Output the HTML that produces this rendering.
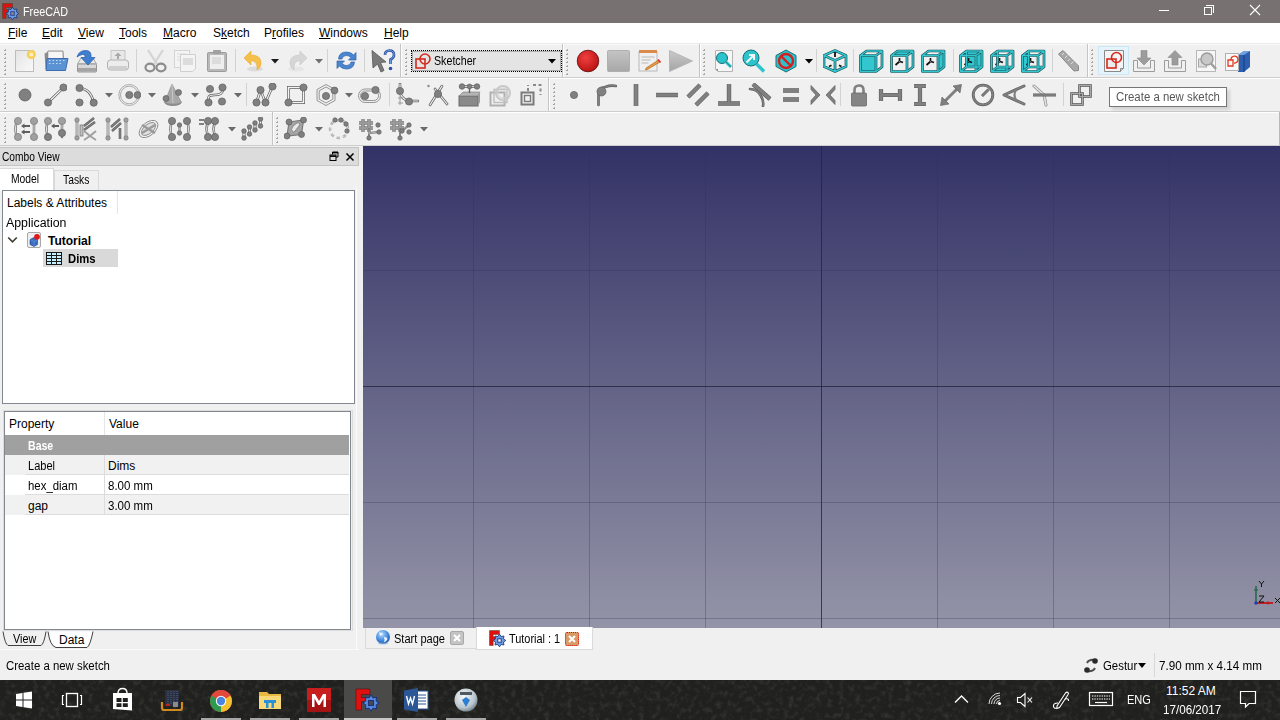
<!DOCTYPE html>
<html><head><meta charset="utf-8">
<style>
*{margin:0;padding:0;box-sizing:border-box}
html,body{width:1280px;height:720px;overflow:hidden;background:#f0f0f0;font-family:"Liberation Sans",sans-serif;font-size:12px;color:#000;position:relative}
.a{position:absolute}
.t{position:absolute;white-space:nowrap;line-height:14px}
#title{left:0;top:0;width:1280px;height:23px;background:#787171}
#menu{left:0;top:23px;width:1280px;height:20px;background:#fff}
.tb{left:0;width:1280px;height:34px;background:#f0f0f0;border-top:1px solid #fbfbfb;border-bottom:1px solid #d6d6d6}
.vsep{position:absolute;width:2px;border-left:1px solid #c8c8c8;border-right:1px solid #fff}
.grip{position:absolute;width:3px;background-image:radial-gradient(circle at 1.5px 1.5px,#a8a8a8 1px,transparent 1.2px);background-size:3px 4px}
#view3d{left:363px;top:146px;width:917px;height:482px;background:linear-gradient(#333266 0%,#9494a8 100%);overflow:hidden}
.gv{position:absolute;top:0;width:1px;height:482px;background:rgba(45,45,90,0.3)}
.gh{position:absolute;left:0;height:1px;width:917px;background:rgba(45,45,90,0.3)}
#taskbar{left:0;top:680px;width:1280px;height:40px;background:#20201e}
.u{text-decoration:underline}
</style></head><body>
<!-- title bar -->
<div id="title" class="a"></div>
<div class="t" style="left:23px;top:5px;color:#fff;font-size:12px;transform:scaleX(0.9);transform-origin:0 0">FreeCAD</div>
<!-- menu -->
<div id="menu" class="a"></div>
<div class="t" style="left:8px;top:26px"><span class="u">F</span>ile</div>
<div class="t" style="left:42px;top:26px"><span class="u">E</span>dit</div>
<div class="t" style="left:78px;top:26px"><span class="u">V</span>iew</div>
<div class="t" style="left:119px;top:26px"><span class="u">T</span>ools</div>
<div class="t" style="left:163px;top:26px"><span class="u">M</span>acro</div>
<div class="t" style="left:213px;top:26px">S<span class="u">k</span>etch</div>
<div class="t" style="left:264px;top:26px">P<span class="u">r</span>ofiles</div>
<div class="t" style="left:319px;top:26px"><span class="u">W</span>indows</div>
<div class="t" style="left:384px;top:26px"><span class="u">H</span>elp</div>
<!-- toolbars -->
<div class="a" style="left:0;top:43px;width:1280px;height:1px;background:#e9e9e9"></div>
<div class="a" style="left:0;top:44px;width:1280px;height:1px;background:#fafafa"></div>
<div class="a" style="left:0;top:77px;width:1280px;height:1px;background:#cdcdcd"></div>
<div class="a" style="left:0;top:78px;width:1280px;height:1px;background:#fff"></div>
<div class="a" style="left:0;top:111px;width:1280px;height:1px;background:#cdcdcd"></div>
<div class="a" style="left:0;top:112px;width:1280px;height:1px;background:#fff"></div>
<div class="a" style="left:0;top:145px;width:1280px;height:1px;background:#cdcdcd"></div>
<div class="a" style="left:1279px;top:112px;width:1px;height:33px;background:#b8b8b8"></div>
<div class="a" style="left:5px;top:49px;width:1px;height:1px;background:#b0b0b0"></div><div class="a" style="left:4px;top:50px;width:2px;height:1px;background:#a4a4a4"></div><div class="a" style="left:5px;top:53px;width:1px;height:1px;background:#b0b0b0"></div><div class="a" style="left:4px;top:54px;width:2px;height:1px;background:#a4a4a4"></div><div class="a" style="left:5px;top:57px;width:1px;height:1px;background:#b0b0b0"></div><div class="a" style="left:4px;top:58px;width:2px;height:1px;background:#a4a4a4"></div><div class="a" style="left:5px;top:61px;width:1px;height:1px;background:#b0b0b0"></div><div class="a" style="left:4px;top:62px;width:2px;height:1px;background:#a4a4a4"></div><div class="a" style="left:5px;top:65px;width:1px;height:1px;background:#b0b0b0"></div><div class="a" style="left:4px;top:66px;width:2px;height:1px;background:#a4a4a4"></div><div class="a" style="left:5px;top:69px;width:1px;height:1px;background:#b0b0b0"></div><div class="a" style="left:4px;top:70px;width:2px;height:1px;background:#a4a4a4"></div><div class="a" style="left:5px;top:73px;width:1px;height:1px;background:#b0b0b0"></div><div class="a" style="left:4px;top:74px;width:2px;height:1px;background:#a4a4a4"></div>
<svg class="a" style="left:14px;top:49px" width="24" height="24" viewBox="0 0 24 24"><defs><linearGradient id="pg" x1="0" y1="0" x2="1" y2="1"><stop offset="0" stop-color="#e4e4e4"/><stop offset="1" stop-color="#fafafa"/></linearGradient></defs>
<rect x="1.5" y="1.5" width="18" height="21" fill="url(#pg)" stroke="#bdbdbd"/>
<circle cx="17.3" cy="5.6" r="4.6" fill="#f8cf58"/><circle cx="17.3" cy="5.6" r="2" fill="#fff2c0"/></svg>
<svg class="a" style="left:43px;top:49px" width="26" height="24" viewBox="0 0 26 24"><path d="M3 6 L5 2 H20 L21 14 H4z" fill="#d8d8d8" stroke="#9a9a9a"/>
<path d="M6 3h13v9H6z" fill="#f6f6f6"/>
<path d="M1.5 4.5 L5 3 L5 20 L2.5 20z" fill="#8c8c8c"/>
<path d="M4 9.5 H25 L22.5 21.5 H3z" fill="#5b92d4" stroke="#3d6db0"/>
<path d="M6 11.5h16M6 14.5h12" stroke="#c7dcf5" stroke-width="1" stroke-dasharray="1.5 2"/></svg>
<svg class="a" style="left:75px;top:49px" width="24" height="24" viewBox="0 0 24 24"><path d="M2.5 15 L6 9 H18 L21.5 15z" fill="#e8e8e8" stroke="#a8a8a8"/>
<rect x="2.5" y="15" width="19" height="8" rx="1" fill="#d8d8d8" stroke="#959595"/><rect x="3" y="19" width="18" height="3.5" fill="#a4a4a4"/>
<path d="M2 8 Q4 1 11.5 1.5 Q16 2 16 6.5 V8.5 H20 L13 16 L6 8.5 H10 V7 Q10 5 7.5 5.5 Q4.5 6 2 8z" fill="#3f7fd0" stroke="#2a5aa8" stroke-width="0.7"/></svg>
<svg class="a" style="left:106px;top:49px" width="24" height="24" viewBox="0 0 24 24"><rect x="5" y="1.5" width="14" height="10" fill="#e8e8e8" stroke="#c4c4c4"/>
<path d="M12 3.5l-3.5 3.5h2.5v3h2v-3h2.5z" fill="#a8a8a8"/>
<rect x="1.5" y="11" width="21" height="10" rx="3" fill="#ececec" stroke="#b0b0b0"/>
<rect x="3" y="17" width="18" height="3" fill="#cfcfcf"/></svg>
<div class="a" style="left:136px;top:49px;width:1px;height:23px;background:#d2d2d2"></div>
<svg class="a" style="left:144px;top:49px" width="23" height="24" viewBox="0 0 23 24"><path d="M4 1 L13 15 M19 1 L10 15" stroke="#dedede" stroke-width="2.6"/>
<path d="M4 1 L13 15 M19 1 L10 15" stroke="#c8c8c8" stroke-width="0.8" fill="none"/>
<ellipse cx="6" cy="18.5" rx="4.5" ry="3.8" fill="none" stroke="#8c8c8c" stroke-width="2.2"/>
<ellipse cx="17" cy="18.5" rx="4.5" ry="3.8" fill="none" stroke="#8c8c8c" stroke-width="2.2"/></svg>
<svg class="a" style="left:173px;top:49px" width="25" height="24" viewBox="0 0 25 24"><rect x="1.5" y="1.5" width="15" height="17" fill="#f4f4f4" stroke="#d4d4d4"/>
<path d="M4 5h9M4 8h9M4 11h9" stroke="#d8d8d8"/>
<path d="M7.5 5.5 H22.5 V20 L19.5 22.5 H7.5z" fill="#f4f4f4" stroke="#cfcfcf"/>
<rect x="10" y="9" width="10" height="7" fill="#dcdcdc"/></svg>
<svg class="a" style="left:206px;top:49px" width="23" height="24" viewBox="0 0 23 24"><rect x="1.5" y="3.5" width="19" height="19" rx="1" fill="#b8b8b8" stroke="#9c9c9c"/>
<rect x="4" y="6" width="14" height="14" fill="#eeeeee"/>
<rect x="7" y="1" width="8" height="4" rx="1" fill="#a0a0a0"/>
<rect x="6" y="8" width="9" height="7" fill="#dcdcdc"/></svg>
<div class="a" style="left:235px;top:49px;width:1px;height:23px;background:#d2d2d2"></div>
<svg class="a" style="left:243px;top:49px" width="21" height="24" viewBox="0 0 21 24"><ellipse cx="12" cy="20" rx="8" ry="2.5" fill="#dcdcdc"/>
<path d="M1 9 L8 2 V6 Q18 6 18 14 Q18 19 14 21 Q15 12 8 11.5 V16z" fill="#f5c04a" stroke="#e8a830" stroke-width="0.6"/></svg>
<svg class="a" style="left:271px;top:59px" width="8" height="5" viewBox="0 0 8 5"><path d="M0 0h8l-4 4.5z" fill="#1a1a1a"/></svg>
<svg class="a" style="left:287px;top:49px" width="21" height="24" viewBox="0 0 21 24"><ellipse cx="9" cy="20" rx="8" ry="2.5" fill="#e6e6e6"/>
<path d="M20 9 L13 2 V6 Q3 6 3 14 Q3 19 7 21 Q6 12 13 11.5 V16z" fill="#d6d6d6" stroke="#c8c8c8" stroke-width="0.6"/></svg>
<svg class="a" style="left:315px;top:59px" width="8" height="5" viewBox="0 0 8 5"><path d="M0 0h8l-4 4.5z" fill="#707070"/></svg>
<div class="a" style="left:327px;top:49px;width:1px;height:23px;background:#d2d2d2"></div>
<svg class="a" style="left:335px;top:49px" width="23" height="24" viewBox="0 0 23 24"><path d="M3.5 10 Q4 3 11.5 3 Q16 3 18.5 6 L21 3.5 V11 H13.5 L16 8.5 Q14 6.5 11.5 6.5 Q7.5 6.5 7 10z" fill="#4a86d0" stroke="#2f62aa" stroke-width="0.7"/>
<path d="M19.5 13 Q19 20 11.5 20 Q7 20 4.5 17 L2 19.5 V12 H9.5 L7 14.5 Q9 16.5 11.5 16.5 Q15.5 16.5 16 13z" fill="#4a86d0" stroke="#2f62aa" stroke-width="0.7"/></svg>
<div class="a" style="left:364px;top:49px;width:1px;height:23px;background:#d2d2d2"></div>
<svg class="a" style="left:370px;top:49px" width="26" height="24" viewBox="0 0 26 24"><path d="M2 1.5 L16 13 L10.5 13.5 L14 21.5 L11 23 L7.5 15 L3 19z" fill="#7a7a7a" stroke="#555" stroke-width="0.8"/>
<path d="M15 6 Q15 1.5 19.5 1.5 Q24 1.5 24 6 Q24 9 20.5 10.5 V15" fill="none" stroke="#2d50a0" stroke-width="2.6"/>
<path d="M15 6 Q15 1.5 19.5 1.5 Q24 1.5 24 6 Q24 9 20.5 10.5 V15" fill="none" stroke="#6b9be0" stroke-width="1"/>
<circle cx="20.5" cy="19.5" r="1.8" fill="#2d50a0"/></svg>
<div class="a" style="left:400px;top:44px;width:1px;height:33px;background:#c4c4c4"></div><div class="a" style="left:401px;top:44px;width:1px;height:33px;background:#fff"></div>
<div class="a" style="left:406px;top:49px;width:1px;height:1px;background:#b0b0b0"></div><div class="a" style="left:405px;top:50px;width:2px;height:1px;background:#a4a4a4"></div><div class="a" style="left:406px;top:53px;width:1px;height:1px;background:#b0b0b0"></div><div class="a" style="left:405px;top:54px;width:2px;height:1px;background:#a4a4a4"></div><div class="a" style="left:406px;top:57px;width:1px;height:1px;background:#b0b0b0"></div><div class="a" style="left:405px;top:58px;width:2px;height:1px;background:#a4a4a4"></div><div class="a" style="left:406px;top:61px;width:1px;height:1px;background:#b0b0b0"></div><div class="a" style="left:405px;top:62px;width:2px;height:1px;background:#a4a4a4"></div><div class="a" style="left:406px;top:65px;width:1px;height:1px;background:#b0b0b0"></div><div class="a" style="left:405px;top:66px;width:2px;height:1px;background:#a4a4a4"></div><div class="a" style="left:406px;top:69px;width:1px;height:1px;background:#b0b0b0"></div><div class="a" style="left:405px;top:70px;width:2px;height:1px;background:#a4a4a4"></div><div class="a" style="left:406px;top:73px;width:1px;height:1px;background:#b0b0b0"></div><div class="a" style="left:405px;top:74px;width:2px;height:1px;background:#a4a4a4"></div>
<div class="a" style="left:411px;top:50px;width:151px;height:22px;background:#e4e4e4;border:1px dotted #000;outline:1px solid #adadad;outline-offset:-2px"></div>
<svg class="a" style="left:415px;top:53px" width="17" height="16" viewBox="0 0 17 16"><rect x="1" y="6" width="9" height="9" fill="none" stroke="#d42a1e" stroke-width="1.6"/><circle cx="10" cy="6" r="5" fill="none" stroke="#d42a1e" stroke-width="1.6"/></svg>
<div class="t" style="left:434px;top:54px;transform:scaleX(0.89);transform-origin:0 0">Sketcher</div>
<svg class="a" style="left:548px;top:59px" width="8" height="5" viewBox="0 0 8 5"><path d="M0 0h8l-4 4.5z" fill="#000"/></svg>
<div class="a" style="left:562px;top:44px;width:1px;height:33px;background:#c4c4c4"></div><div class="a" style="left:563px;top:44px;width:1px;height:33px;background:#fff"></div>
<div class="a" style="left:567px;top:49px;width:1px;height:1px;background:#b0b0b0"></div><div class="a" style="left:566px;top:50px;width:2px;height:1px;background:#a4a4a4"></div><div class="a" style="left:567px;top:53px;width:1px;height:1px;background:#b0b0b0"></div><div class="a" style="left:566px;top:54px;width:2px;height:1px;background:#a4a4a4"></div><div class="a" style="left:567px;top:57px;width:1px;height:1px;background:#b0b0b0"></div><div class="a" style="left:566px;top:58px;width:2px;height:1px;background:#a4a4a4"></div><div class="a" style="left:567px;top:61px;width:1px;height:1px;background:#b0b0b0"></div><div class="a" style="left:566px;top:62px;width:2px;height:1px;background:#a4a4a4"></div><div class="a" style="left:567px;top:65px;width:1px;height:1px;background:#b0b0b0"></div><div class="a" style="left:566px;top:66px;width:2px;height:1px;background:#a4a4a4"></div><div class="a" style="left:567px;top:69px;width:1px;height:1px;background:#b0b0b0"></div><div class="a" style="left:566px;top:70px;width:2px;height:1px;background:#a4a4a4"></div><div class="a" style="left:567px;top:73px;width:1px;height:1px;background:#b0b0b0"></div><div class="a" style="left:566px;top:74px;width:2px;height:1px;background:#a4a4a4"></div>
<svg class="a" style="left:575px;top:49px" width="26" height="24" viewBox="0 0 26 24"><defs><radialGradient id="rd" cx="0.4" cy="0.35" r="0.7"><stop offset="0" stop-color="#f04040"/><stop offset="1" stop-color="#b81010"/></radialGradient></defs><circle cx="13" cy="12" r="10.8" fill="url(#rd)" stroke="#5a1010" stroke-width="0.8"/></svg>
<svg class="a" style="left:606px;top:49px" width="25" height="24" viewBox="0 0 25 24"><defs><linearGradient id="sq" x1="0" y1="0" x2="0" y2="1"><stop offset="0" stop-color="#c4c4c4"/><stop offset="1" stop-color="#a8a8a8"/></linearGradient></defs><rect x="1.5" y="1.5" width="22" height="21" rx="1" fill="url(#sq)" stroke="#b0b0b0"/></svg>
<svg class="a" style="left:637px;top:49px" width="25" height="24" viewBox="0 0 25 24"><rect x="2" y="3" width="18" height="19" fill="#f0f0f0" stroke="#b8b8b8"/>
<rect x="2" y="1" width="18" height="3" fill="#d98a4a"/>
<path d="M4.5 8h13M4.5 11h9M4.5 14h7" stroke="#b8b8b8"/>
<path d="M9 19 L21.5 11 L23 13 L10.5 20.5 L8.5 21z" fill="#e89a40" stroke="#a0601a" stroke-width="0.6"/><path d="M21 10.5 l2.5 3" stroke="#e03030" stroke-width="1.6"/></svg>
<svg class="a" style="left:668px;top:49px" width="26" height="24" viewBox="0 0 26 24"><defs><linearGradient id="pl" x1="0" y1="0" x2="0" y2="1"><stop offset="0" stop-color="#cacaca"/><stop offset="1" stop-color="#a4a4a4"/></linearGradient></defs><path d="M1.5 1.5 L24.5 12 L1.5 22.5z" fill="url(#pl)" stroke="#b8b8b8"/></svg>
<div class="a" style="left:699px;top:44px;width:1px;height:33px;background:#c4c4c4"></div><div class="a" style="left:700px;top:44px;width:1px;height:33px;background:#fff"></div>
<div class="a" style="left:704px;top:49px;width:1px;height:1px;background:#b0b0b0"></div><div class="a" style="left:703px;top:50px;width:2px;height:1px;background:#a4a4a4"></div><div class="a" style="left:704px;top:53px;width:1px;height:1px;background:#b0b0b0"></div><div class="a" style="left:703px;top:54px;width:2px;height:1px;background:#a4a4a4"></div><div class="a" style="left:704px;top:57px;width:1px;height:1px;background:#b0b0b0"></div><div class="a" style="left:703px;top:58px;width:2px;height:1px;background:#a4a4a4"></div><div class="a" style="left:704px;top:61px;width:1px;height:1px;background:#b0b0b0"></div><div class="a" style="left:703px;top:62px;width:2px;height:1px;background:#a4a4a4"></div><div class="a" style="left:704px;top:65px;width:1px;height:1px;background:#b0b0b0"></div><div class="a" style="left:703px;top:66px;width:2px;height:1px;background:#a4a4a4"></div><div class="a" style="left:704px;top:69px;width:1px;height:1px;background:#b0b0b0"></div><div class="a" style="left:703px;top:70px;width:2px;height:1px;background:#a4a4a4"></div><div class="a" style="left:704px;top:73px;width:1px;height:1px;background:#b0b0b0"></div><div class="a" style="left:703px;top:74px;width:2px;height:1px;background:#a4a4a4"></div>
<svg class="a" style="left:714px;top:49px" width="20" height="24" viewBox="0 0 20 24"><path d="M1.5 1.5 H18.5 V22.5 H4 L1.5 20z" fill="#f6f6f6" stroke="#b4b4b4"/><path d="M1.5 20 L4 22.5 V20z" fill="#8a8a8a"/>
<circle cx="8" cy="9" r="5.5" fill="#2bc3cc" stroke="#1a6f74"/><path d="M12 13 L17 18" stroke="#2bc3cc" stroke-width="3"/><path d="M12 13 L17 18" stroke="#1a6f74" stroke-width="0.6" fill="none"/></svg>
<svg class="a" style="left:741px;top:49px" width="26" height="24" viewBox="0 0 26 24"><circle cx="10" cy="9" r="8" fill="#2bc3cc" stroke="#1a6f74"/><path d="M15.5 15 L23 22.5" stroke="#2bc3cc" stroke-width="3.4"/>
<path d="M5.5 13.5 L12 7 M8 6 H13 V11" stroke="#f4f4f4" stroke-width="2" fill="none"/></svg>
<svg class="a" style="left:773px;top:49px" width="26" height="24" viewBox="0 0 26 24"><path d="M13 1 L23 6.5 V17.5 L13 23 L3 17.5 V6.5z" fill="#2bc3cc" stroke="#1a6f74"/>
<circle cx="13" cy="12" r="7" fill="none" stroke="#d42020" stroke-width="2.4"/><path d="M8 7 L18 17" stroke="#d42020" stroke-width="2.4"/></svg>
<svg class="a" style="left:805px;top:59px" width="8" height="5" viewBox="0 0 8 5"><path d="M0 0h8l-4 4.5z" fill="#000"/></svg>
<div class="a" style="left:816px;top:49px;width:1px;height:23px;background:#d2d2d2"></div>
<svg class="a" style="left:823px;top:49px" width="25" height="24" viewBox="0 0 25 24"><path d="M12 1.5 L23 6.5 V17.5 L12 22.5 L1 17.5 V6.5z M1 6.5 L12 11.5 L23 6.5 M12 11.5 V22.5" fill="none" stroke="#1d4f54" stroke-width="2.7" stroke-linejoin="round"/><path d="M12 1.5 L23 6.5 V17.5 L12 22.5 L1 17.5 V6.5z M1 6.5 L12 11.5 L23 6.5 M12 11.5 V22.5" fill="none" stroke="#32c6cf" stroke-width="1.4" stroke-linejoin="round"/><path d="M12 3.5 V8" stroke="#111" stroke-width="1.8"/><path d="M6 17.5 L8.5 16.3 M16 16.3 L18.5 17.5" stroke="#111" stroke-width="1.8"/></svg>
<div class="a" style="left:853px;top:49px;width:1px;height:23px;background:#d2d2d2"></div>
<svg class="a" style="left:859px;top:49px" width="25" height="24" viewBox="0 0 25 24"><path d="M1.5 6.5 H17 V22.5 H1.5z" fill="#32c6cf"/><path d="M1.5 6.5 H17 V22.5 H1.5z M1.5 6.5 L7.5 2 H23 L17 6.5 M23 2 V18 L17 22.5" fill="none" stroke="#1d4f54" stroke-width="2.7" stroke-linejoin="round"/><path d="M1.5 6.5 H17 V22.5 H1.5z M1.5 6.5 L7.5 2 H23 L17 6.5 M23 2 V18 L17 22.5" fill="none" stroke="#32c6cf" stroke-width="1.4" stroke-linejoin="round"/></svg>
<svg class="a" style="left:890px;top:49px" width="25" height="24" viewBox="0 0 25 24"><path d="M1.5 6.5 L7.5 2 H23 L17 6.5z" fill="#32c6cf"/><path d="M9.5 9 V12 M9.5 12.5 L5.5 16 M10 12.5 L13 13.5" stroke="#111" stroke-width="1.7"/><path d="M1.5 6.5 H17 V22.5 H1.5z M1.5 6.5 L7.5 2 H23 L17 6.5 M23 2 V18 L17 22.5" fill="none" stroke="#1d4f54" stroke-width="2.7" stroke-linejoin="round"/><path d="M1.5 6.5 H17 V22.5 H1.5z M1.5 6.5 L7.5 2 H23 L17 6.5 M23 2 V18 L17 22.5" fill="none" stroke="#32c6cf" stroke-width="1.4" stroke-linejoin="round"/></svg>
<svg class="a" style="left:921px;top:49px" width="25" height="24" viewBox="0 0 25 24"><path d="M17 6.5 L23 2 V18 L17 22.5z" fill="#32c6cf"/><path d="M9.5 9 V12 M9.5 12.5 L5.5 16 M10 12.5 L13 13.5" stroke="#111" stroke-width="1.7"/><path d="M1.5 6.5 H17 V22.5 H1.5z M1.5 6.5 L7.5 2 H23 L17 6.5 M23 2 V18 L17 22.5" fill="none" stroke="#1d4f54" stroke-width="2.7" stroke-linejoin="round"/><path d="M1.5 6.5 H17 V22.5 H1.5z M1.5 6.5 L7.5 2 H23 L17 6.5 M23 2 V18 L17 22.5" fill="none" stroke="#32c6cf" stroke-width="1.4" stroke-linejoin="round"/></svg>
<div class="a" style="left:953px;top:49px;width:1px;height:23px;background:#d2d2d2"></div>
<svg class="a" style="left:959px;top:49px" width="25" height="24" viewBox="0 0 25 24"><path d="M7.5 2 H23 V18 H7.5z" fill="#32c6cf"/><path d="M9.5 9 V12 M9.5 12.5 L5.5 16 M10 12.5 L13 13.5" stroke="#111" stroke-width="1.7"/><path d="M1.5 6.5 H17 V22.5 H1.5z M1.5 6.5 L7.5 2 H23 L17 6.5 M23 2 V18 L17 22.5 M7.5 2 V18 H23 M7.5 18 L1.5 22.5" fill="none" stroke="#1d4f54" stroke-width="2.7" stroke-linejoin="round"/><path d="M1.5 6.5 H17 V22.5 H1.5z M1.5 6.5 L7.5 2 H23 L17 6.5 M23 2 V18 L17 22.5 M7.5 2 V18 H23 M7.5 18 L1.5 22.5" fill="none" stroke="#32c6cf" stroke-width="1.4" stroke-linejoin="round"/></svg>
<svg class="a" style="left:990px;top:49px" width="25" height="24" viewBox="0 0 25 24"><path d="M1.5 22.5 L7.5 18 H23 L17 22.5z" fill="#32c6cf"/><path d="M9.5 9 V12 M9.5 12.5 L5.5 16 M10 12.5 L13 13.5" stroke="#111" stroke-width="1.7"/><path d="M1.5 6.5 H17 V22.5 H1.5z M1.5 6.5 L7.5 2 H23 L17 6.5 M23 2 V18 L17 22.5 M7.5 2 V18 H23 M7.5 18 L1.5 22.5" fill="none" stroke="#1d4f54" stroke-width="2.7" stroke-linejoin="round"/><path d="M1.5 6.5 H17 V22.5 H1.5z M1.5 6.5 L7.5 2 H23 L17 6.5 M23 2 V18 L17 22.5 M7.5 2 V18 H23 M7.5 18 L1.5 22.5" fill="none" stroke="#32c6cf" stroke-width="1.4" stroke-linejoin="round"/></svg>
<svg class="a" style="left:1021px;top:49px" width="25" height="24" viewBox="0 0 25 24"><path d="M1.5 6.5 L7.5 2 V18 L1.5 22.5z" fill="#32c6cf"/><path d="M9.5 9 V12 M9.5 12.5 L5.5 16 M10 12.5 L13 13.5" stroke="#111" stroke-width="1.7"/><path d="M1.5 6.5 H17 V22.5 H1.5z M1.5 6.5 L7.5 2 H23 L17 6.5 M23 2 V18 L17 22.5 M7.5 2 V18 H23 M7.5 18 L1.5 22.5" fill="none" stroke="#1d4f54" stroke-width="2.7" stroke-linejoin="round"/><path d="M1.5 6.5 H17 V22.5 H1.5z M1.5 6.5 L7.5 2 H23 L17 6.5 M23 2 V18 L17 22.5 M7.5 2 V18 H23 M7.5 18 L1.5 22.5" fill="none" stroke="#32c6cf" stroke-width="1.4" stroke-linejoin="round"/></svg>
<div class="a" style="left:1052px;top:49px;width:1px;height:23px;background:#d2d2d2"></div>
<svg class="a" style="left:1057px;top:49px" width="23" height="24" viewBox="0 0 23 24"><path d="M1.5 5 L6 1.5 L21.5 17 V21.5 L17 22z" fill="#a8a8a8" stroke="#888"/><path d="M5 6l2-2M8 9l2.5-2.5M11 12l2-2M14 15l2.5-2.5" stroke="#ddd"/></svg>
<div class="a" style="left:1087px;top:44px;width:1px;height:33px;background:#c4c4c4"></div><div class="a" style="left:1088px;top:44px;width:1px;height:33px;background:#fff"></div>
<div class="a" style="left:1092px;top:49px;width:1px;height:1px;background:#b0b0b0"></div><div class="a" style="left:1091px;top:50px;width:2px;height:1px;background:#a4a4a4"></div><div class="a" style="left:1092px;top:53px;width:1px;height:1px;background:#b0b0b0"></div><div class="a" style="left:1091px;top:54px;width:2px;height:1px;background:#a4a4a4"></div><div class="a" style="left:1092px;top:57px;width:1px;height:1px;background:#b0b0b0"></div><div class="a" style="left:1091px;top:58px;width:2px;height:1px;background:#a4a4a4"></div><div class="a" style="left:1092px;top:61px;width:1px;height:1px;background:#b0b0b0"></div><div class="a" style="left:1091px;top:62px;width:2px;height:1px;background:#a4a4a4"></div><div class="a" style="left:1092px;top:65px;width:1px;height:1px;background:#b0b0b0"></div><div class="a" style="left:1091px;top:66px;width:2px;height:1px;background:#a4a4a4"></div><div class="a" style="left:1092px;top:69px;width:1px;height:1px;background:#b0b0b0"></div><div class="a" style="left:1091px;top:70px;width:2px;height:1px;background:#a4a4a4"></div><div class="a" style="left:1092px;top:73px;width:1px;height:1px;background:#b0b0b0"></div><div class="a" style="left:1091px;top:74px;width:2px;height:1px;background:#a4a4a4"></div>
<div class="a" style="left:1098px;top:46px;width:31px;height:29px;background:#e5f3fb;border:1px solid #cce8f6"></div>
<svg class="a" style="left:1103px;top:49px" width="22" height="24" viewBox="0 0 22 24"><path d="M1.5 1.5 H20.5 V19.5 L17.5 22.5 H1.5z" fill="#f4f4f4" stroke="#8a8a8a"/><path d="M17.5 22.5 V19.5 H20.5" fill="#c8c8c8" stroke="#8a8a8a"/>
<rect x="4" y="10" width="9" height="9" fill="#ececec" stroke="#d42a1e" stroke-width="1.6"/><circle cx="13.5" cy="8.5" r="5" fill="none" stroke="#d42a1e" stroke-width="1.6"/></svg>
<svg class="a" style="left:1132px;top:49px" width="24" height="24" viewBox="0 0 24 24"><path d="M1.5 11.5 V22.5 H22.5 V11.5 H18.5 V19 H5.5 V11.5z" fill="#f0f0f0" stroke="#9c9c9c"/>
<path d="M9 1.5 H15 V9 H19 L12 16 L5 9 H9z" fill="#9c9c9c" stroke="#8a8a8a" stroke-width="0.6"/></svg>
<svg class="a" style="left:1163px;top:49px" width="24" height="24" viewBox="0 0 24 24"><path d="M1.5 11.5 V22.5 H22.5 V11.5 H18.5 V19 H5.5 V11.5z" fill="#f0f0f0" stroke="#9c9c9c"/>
<path d="M9 16 H15 V8.5 H19 L12 1.5 L5 8.5 H9z" fill="#9c9c9c" stroke="#8a8a8a" stroke-width="0.6"/></svg>
<svg class="a" style="left:1195px;top:49px" width="23" height="24" viewBox="0 0 23 24"><rect x="1.5" y="1.5" width="19" height="21" fill="#f6f6f6" stroke="#b8b8b8"/><rect x="3.5" y="10" width="8" height="8" fill="#dcdcdc" stroke="#a8a8a8"/>
<circle cx="12" cy="10" r="6" fill="#c8c8c8" stroke="#9c9c9c" stroke-width="1.4"/><path d="M16 14.5 L21 20" stroke="#9c9c9c" stroke-width="2.4"/></svg>
<svg class="a" style="left:1224px;top:49px" width="27" height="24" viewBox="0 0 27 24"><path d="M14 6 L20 2 H26 V18 L20 23 H14z" fill="#2c5fb0"/><path d="M14 6 L20 2 H26 L20 6z" fill="#6fa0e0"/><path d="M20 6 V23" stroke="#163c80"/>
<rect x="1.5" y="4.5" width="13" height="17" fill="#f8f8f8" stroke="#b0b0b0"/>
<path d="M4 11 h5 v6 h-5z M7 11 a3.5 3.5 0 1 1 3 3" fill="none" stroke="#e03a1e" stroke-width="1.3"/></svg>

<div class="a" style="left:5px;top:83px;width:1px;height:1px;background:#b0b0b0"></div><div class="a" style="left:4px;top:84px;width:2px;height:1px;background:#a4a4a4"></div><div class="a" style="left:5px;top:87px;width:1px;height:1px;background:#b0b0b0"></div><div class="a" style="left:4px;top:88px;width:2px;height:1px;background:#a4a4a4"></div><div class="a" style="left:5px;top:91px;width:1px;height:1px;background:#b0b0b0"></div><div class="a" style="left:4px;top:92px;width:2px;height:1px;background:#a4a4a4"></div><div class="a" style="left:5px;top:95px;width:1px;height:1px;background:#b0b0b0"></div><div class="a" style="left:4px;top:96px;width:2px;height:1px;background:#a4a4a4"></div><div class="a" style="left:5px;top:99px;width:1px;height:1px;background:#b0b0b0"></div><div class="a" style="left:4px;top:100px;width:2px;height:1px;background:#a4a4a4"></div><div class="a" style="left:5px;top:103px;width:1px;height:1px;background:#b0b0b0"></div><div class="a" style="left:4px;top:104px;width:2px;height:1px;background:#a4a4a4"></div><div class="a" style="left:5px;top:107px;width:1px;height:1px;background:#b0b0b0"></div><div class="a" style="left:4px;top:108px;width:2px;height:1px;background:#a4a4a4"></div>
<svg class="a" style="left:13px;top:83px" width="24" height="24" viewBox="0 0 24 24"><circle cx="12" cy="12" r="6" fill="#808080" stroke="#5e5e5e" stroke-width="0.8"/></svg>
<svg class="a" style="left:43px;top:83px" width="24" height="24" viewBox="0 0 24 24"><path d="M5 19.5 L20.5 4.5" fill="none" stroke="#5e5e5e" stroke-width="2.6" stroke-linecap="round"/><path d="M5 19.5 L20.5 4.5" fill="none" stroke="#f4f4f4" stroke-width="1.2000000000000002" stroke-linecap="round"/><circle cx="5" cy="19.5" r="3.6" fill="#808080" stroke="#5e5e5e" stroke-width="0.7"/><circle cx="20.5" cy="4.5" r="3.6" fill="#808080" stroke="#5e5e5e" stroke-width="0.7"/></svg>
<svg class="a" style="left:74px;top:83px" width="24" height="24" viewBox="0 0 24 24"><path d="M5.5 5 Q17 6 19.5 19.5" fill="none" stroke="#5e5e5e" stroke-width="2.6" stroke-linecap="round"/><path d="M5.5 5 Q17 6 19.5 19.5" fill="none" stroke="#f4f4f4" stroke-width="1.2000000000000002" stroke-linecap="round"/><circle cx="5.5" cy="5" r="3.6" fill="#808080" stroke="#5e5e5e" stroke-width="0.7"/><circle cx="5.5" cy="19.5" r="3.6" fill="#808080" stroke="#5e5e5e" stroke-width="0.7"/><circle cx="19.7" cy="19.7" r="3.6" fill="#808080" stroke="#5e5e5e" stroke-width="0.7"/></svg>
<svg class="a" style="left:105px;top:93px" width="8" height="5" viewBox="0 0 8 5"><path d="M0 0h8l-4 4.5z" fill="#6a6a6a"/></svg>
<svg class="a" style="left:117px;top:83px" width="24" height="24" viewBox="0 0 24 24"><circle cx="12.3" cy="12" r="10.5" fill="none" stroke="#9a9a9a" stroke-width="0.8"/><circle cx="12.3" cy="12" r="8.8" fill="none" stroke="#9a9a9a" stroke-width="0.8"/><circle cx="12.3" cy="12" r="3.6" fill="#808080" stroke="#5e5e5e" stroke-width="0.7"/><circle cx="20.5" cy="12" r="3.4" fill="#808080" stroke="#5e5e5e" stroke-width="0.7"/></svg>
<svg class="a" style="left:148px;top:93px" width="8" height="5" viewBox="0 0 8 5"><path d="M0 0h8l-4 4.5z" fill="#6a6a6a"/></svg>
<svg class="a" style="left:161px;top:83px" width="24" height="24" viewBox="0 0 24 24"><ellipse cx="12" cy="19.5" rx="8.5" ry="3.5" fill="#8a8a8a"/><path d="M11 1 L3.5 19.5 Q12 23 20.5 19.5z" fill="#a8a8a8" stroke="#8a8a8a" stroke-width="0.6"/><path d="M11 1 L12 20" stroke="#c8c8c8" stroke-width="1"/><circle cx="17.5" cy="9.5" r="3" fill="#808080" stroke="#5e5e5e" stroke-width="0.7"/><circle cx="5" cy="15.5" r="3" fill="#808080" stroke="#5e5e5e" stroke-width="0.7"/></svg>
<svg class="a" style="left:191px;top:93px" width="8" height="5" viewBox="0 0 8 5"><path d="M0 0h8l-4 4.5z" fill="#6a6a6a"/></svg>
<svg class="a" style="left:204px;top:83px" width="24" height="24" viewBox="0 0 24 24"><path d="M4.5 19.5 V15 Q4.5 12 10 12 Q18 12 18.5 8 V4.5" fill="none" stroke="#5e5e5e" stroke-width="2.6" stroke-linecap="round"/><path d="M4.5 19.5 V15 Q4.5 12 10 12 Q18 12 18.5 8 V4.5" fill="none" stroke="#f4f4f4" stroke-width="1.2000000000000002" stroke-linecap="round"/><circle cx="6" cy="6" r="3.6" fill="#808080" stroke="#5e5e5e" stroke-width="0.7"/><circle cx="18.5" cy="4.5" r="3.6" fill="#808080" stroke="#5e5e5e" stroke-width="0.7"/><circle cx="4.5" cy="19.5" r="3.6" fill="#808080" stroke="#5e5e5e" stroke-width="0.7"/><circle cx="18" cy="18.5" r="3.6" fill="#808080" stroke="#5e5e5e" stroke-width="0.7"/></svg>
<svg class="a" style="left:234px;top:93px" width="8" height="5" viewBox="0 0 8 5"><path d="M0 0h8l-4 4.5z" fill="#6a6a6a"/></svg>
<div class="a" style="left:246px;top:83px;width:1px;height:23px;background:#d2d2d2"></div>
<svg class="a" style="left:252px;top:83px" width="25" height="24" viewBox="0 0 25 24"><path d="M4.5 19.5 L8.5 7 L13.5 19.5 L20.5 3.5" fill="none" stroke="#5e5e5e" stroke-width="2.6" stroke-linecap="round"/><path d="M4.5 19.5 L8.5 7 L13.5 19.5 L20.5 3.5" fill="none" stroke="#f4f4f4" stroke-width="1.2000000000000002" stroke-linecap="round"/><circle cx="8.5" cy="7" r="3.6" fill="#808080" stroke="#5e5e5e" stroke-width="0.7"/><circle cx="20.5" cy="3.5" r="3.6" fill="#808080" stroke="#5e5e5e" stroke-width="0.7"/><circle cx="4.5" cy="19.5" r="3.6" fill="#808080" stroke="#5e5e5e" stroke-width="0.7"/><circle cx="13.5" cy="19.5" r="3.6" fill="#808080" stroke="#5e5e5e" stroke-width="0.7"/></svg>
<svg class="a" style="left:284px;top:83px" width="24" height="24" viewBox="0 0 24 24"><path d="M4.5 4.5 H19.5 V19.5 H4.5z" fill="none" stroke="#5e5e5e" stroke-width="3" stroke-linecap="round"/><path d="M4.5 4.5 H19.5 V19.5 H4.5z" fill="none" stroke="#f4f4f4" stroke-width="1.6" stroke-linecap="round"/><circle cx="19.5" cy="4.5" r="3.6" fill="#808080" stroke="#5e5e5e" stroke-width="0.7"/><circle cx="4.5" cy="19.5" r="3.6" fill="#808080" stroke="#5e5e5e" stroke-width="0.7"/></svg>
<svg class="a" style="left:315px;top:83px" width="24" height="24" viewBox="0 0 24 24"><path d="M11 1.5 L20 6.5 V17.5 L11 22.5 L2 17.5 V6.5z" fill="none" stroke="#8a8a8a" stroke-width="0.9"/><path d="M11 4 L17.8 7.8 V16.2 L11 20 L4.2 16.2 V7.8z" fill="none" stroke="#8a8a8a" stroke-width="0.9"/><circle cx="11" cy="13" r="3.6" fill="#808080" stroke="#5e5e5e" stroke-width="0.7"/><circle cx="19.5" cy="7.5" r="3.4" fill="#808080" stroke="#5e5e5e" stroke-width="0.7"/></svg>
<svg class="a" style="left:345px;top:93px" width="8" height="5" viewBox="0 0 8 5"><path d="M0 0h8l-4 4.5z" fill="#6a6a6a"/></svg>
<svg class="a" style="left:357px;top:83px" width="25" height="24" viewBox="0 0 25 24"><rect x="1.5" y="6" width="22" height="13.5" rx="6.7" fill="none" stroke="#8a8a8a" stroke-width="0.9"/><rect x="3.5" y="8" width="18" height="9.5" rx="4.7" fill="none" stroke="#8a8a8a" stroke-width="0.9"/><circle cx="8" cy="13" r="3.6" fill="#808080" stroke="#5e5e5e" stroke-width="0.7"/><circle cx="18.5" cy="7" r="3.6" fill="#808080" stroke="#5e5e5e" stroke-width="0.7"/></svg>
<div class="a" style="left:389px;top:83px;width:1px;height:23px;background:#d2d2d2"></div>
<svg class="a" style="left:395px;top:83px" width="24" height="24" viewBox="0 0 24 24"><path d="M5 1 V8 Q5 13 10 16.5 L13 18 H23" fill="none" stroke="#5e5e5e" stroke-width="2.6" stroke-linecap="round"/><path d="M5 1 V8 Q5 13 10 16.5 L13 18 H23" fill="none" stroke="#f4f4f4" stroke-width="1.2000000000000002" stroke-linecap="round"/><path d="M3 15 H8 M5 13 V22 M3 20 H8" stroke="#9a9a9a" stroke-width="1"/><circle cx="5" cy="8" r="3.6" fill="#808080" stroke="#5e5e5e" stroke-width="0.7"/><circle cx="14" cy="18.5" r="3.6" fill="#808080" stroke="#5e5e5e" stroke-width="0.7"/></svg>
<svg class="a" style="left:426px;top:83px" width="24" height="24" viewBox="0 0 24 24"><path d="M4 22 L16 3" fill="none" stroke="#5e5e5e" stroke-width="2.6" stroke-linecap="round"/><path d="M4 22 L16 3" fill="none" stroke="#f4f4f4" stroke-width="1.2000000000000002" stroke-linecap="round"/><path d="M9 6 L21 21" fill="none" stroke="#5e5e5e" stroke-width="2.6" stroke-linecap="round"/><path d="M9 6 L21 21" fill="none" stroke="#f4f4f4" stroke-width="1.2000000000000002" stroke-linecap="round"/><circle cx="2.5" cy="3" r="1.2" fill="#8a8a8a"/><circle cx="12" cy="11" r="3.6" fill="#808080" stroke="#5e5e5e" stroke-width="0.7"/></svg>
<svg class="a" style="left:457px;top:83px" width="24" height="24" viewBox="0 0 24 24"><rect x="2" y="13" width="19" height="10" fill="#8a8a8a" stroke="#6a6a6a"/><path d="M2 13 L6 9 H23 L21 13z" fill="#b4b4b4" stroke="#7a7a7a" stroke-width="0.6"/><path d="M21 13 L23 9 V19 L21 23z" fill="#9a9a9a"/><path d="M5 3.5 H20" fill="none" stroke="#5e5e5e" stroke-width="2.6" stroke-linecap="round"/><path d="M5 3.5 H20" fill="none" stroke="#f4f4f4" stroke-width="1.2000000000000002" stroke-linecap="round"/><circle cx="5" cy="3.5" r="2.8" fill="#808080" stroke="#5e5e5e" stroke-width="0.7"/><circle cx="20" cy="3.5" r="2.8" fill="#808080" stroke="#5e5e5e" stroke-width="0.7"/><path d="M12.5 3.5 V10" stroke="#5e5e5e" stroke-width="1.4"/><circle cx="12.5" cy="3.5" r="2.4" fill="#808080" stroke="#5e5e5e" stroke-width="0.7"/></svg>
<svg class="a" style="left:488px;top:83px" width="24" height="24" viewBox="0 0 24 24"><rect x="2.5" y="9.5" width="14" height="13" fill="none" stroke="#b0b0b0" stroke-width="2"/><rect x="6" y="6.5" width="13" height="13" fill="none" stroke="#c0c0c0" stroke-width="1.5"/><circle cx="15" cy="10" r="7" fill="none" stroke="#c8c8c8" stroke-width="2"/><circle cx="15" cy="10" r="5" fill="none" stroke="#d4d4d4" stroke-width="1"/></svg>
<svg class="a" style="left:519px;top:83px" width="24" height="24" viewBox="0 0 24 24"><rect x="2.5" y="9.5" width="12" height="12" fill="none" stroke="#7a7a7a" stroke-width="2"/><rect x="5.5" y="12.5" width="6" height="6" fill="none" stroke="#7a7a7a" stroke-width="1.4"/><path d="M14 2 H21.5 V12" fill="none" stroke="#8a8a8a" stroke-width="2" stroke-dasharray="3 2.5"/><path d="M9 8 V2" stroke="#8a8a8a" stroke-width="2" stroke-dasharray="3 2"/></svg>
<div class="a" style="left:548px;top:78px;width:1px;height:33px;background:#c4c4c4"></div><div class="a" style="left:549px;top:78px;width:1px;height:33px;background:#fff"></div>
<div class="a" style="left:554px;top:83px;width:1px;height:1px;background:#b0b0b0"></div><div class="a" style="left:553px;top:84px;width:2px;height:1px;background:#a4a4a4"></div><div class="a" style="left:554px;top:87px;width:1px;height:1px;background:#b0b0b0"></div><div class="a" style="left:553px;top:88px;width:2px;height:1px;background:#a4a4a4"></div><div class="a" style="left:554px;top:91px;width:1px;height:1px;background:#b0b0b0"></div><div class="a" style="left:553px;top:92px;width:2px;height:1px;background:#a4a4a4"></div><div class="a" style="left:554px;top:95px;width:1px;height:1px;background:#b0b0b0"></div><div class="a" style="left:553px;top:96px;width:2px;height:1px;background:#a4a4a4"></div><div class="a" style="left:554px;top:99px;width:1px;height:1px;background:#b0b0b0"></div><div class="a" style="left:553px;top:100px;width:2px;height:1px;background:#a4a4a4"></div><div class="a" style="left:554px;top:103px;width:1px;height:1px;background:#b0b0b0"></div><div class="a" style="left:553px;top:104px;width:2px;height:1px;background:#a4a4a4"></div><div class="a" style="left:554px;top:107px;width:1px;height:1px;background:#b0b0b0"></div><div class="a" style="left:553px;top:108px;width:2px;height:1px;background:#a4a4a4"></div>
<svg class="a" style="left:562px;top:83px" width="24" height="24" viewBox="0 0 24 24"><circle cx="12" cy="12" r="3.6" fill="#808080" stroke="#5e5e5e" stroke-width="0.7"/></svg>
<svg class="a" style="left:593px;top:83px" width="24" height="24" viewBox="0 0 24 24"><path d="M5.5 22 V12 Q5.5 5 12 4 Q18 2 23 3" fill="none" stroke="#5e5e5e" stroke-width="2.6" stroke-linecap="round"/><path d="M5.5 22 V12 Q5.5 5 12 4 Q18 2 23 3" fill="none" stroke="#808080" stroke-width="1.4" stroke-linecap="round"/><circle cx="8.5" cy="8.5" r="4.5" fill="#808080" stroke="#5e5e5e" stroke-width="0.7"/></svg>
<svg class="a" style="left:624px;top:83px" width="24" height="24" viewBox="0 0 24 24"><path d="M12 1 V23" fill="none" stroke="#5e5e5e" stroke-width="4.6"/><path d="M12 1 V23" fill="none" stroke="#808080" stroke-width="3.3999999999999995"/></svg>
<svg class="a" style="left:655px;top:83px" width="24" height="24" viewBox="0 0 24 24"><path d="M1 12 H23" fill="none" stroke="#5e5e5e" stroke-width="4.4"/><path d="M1 12 H23" fill="none" stroke="#808080" stroke-width="3.2"/></svg>
<svg class="a" style="left:686px;top:83px" width="24" height="24" viewBox="0 0 24 24"><path d="M2 14 L14 2 M10 22 L22 10" fill="none" stroke="#5e5e5e" stroke-width="4.4"/><path d="M2 14 L14 2 M10 22 L22 10" fill="none" stroke="#808080" stroke-width="3.2"/></svg>
<svg class="a" style="left:717px;top:83px" width="24" height="24" viewBox="0 0 24 24"><path d="M12 1 V19 M1 20.5 H23" fill="none" stroke="#5e5e5e" stroke-width="4.4"/><path d="M12 1 V19 M1 20.5 H23" fill="none" stroke="#808080" stroke-width="3.2"/></svg>
<svg class="a" style="left:748px;top:83px" width="24" height="24" viewBox="0 0 24 24"><path d="M5 1 L22 16" fill="none" stroke="#5e5e5e" stroke-width="4.4"/><path d="M5 1 L22 16" fill="none" stroke="#808080" stroke-width="3.2"/><path d="M2 6 Q9 6 13 13 Q16 18 15 23" fill="none" stroke="#5e5e5e" stroke-width="2.6" stroke-linecap="round"/><path d="M2 6 Q9 6 13 13 Q16 18 15 23" fill="none" stroke="#808080" stroke-width="1.4" stroke-linecap="round"/></svg>
<svg class="a" style="left:779px;top:83px" width="24" height="24" viewBox="0 0 24 24"><path d="M4 7.5 H20 M4 16.5 H20" fill="none" stroke="#5e5e5e" stroke-width="4.6"/><path d="M4 7.5 H20 M4 16.5 H20" fill="none" stroke="#808080" stroke-width="3.3999999999999995"/></svg>
<svg class="a" style="left:810px;top:83px" width="26" height="24" viewBox="0 0 26 24"><path d="M1 2.5 L10 12 L1 21.5 V17.5 L6 12 L1 6.5z M25 2.5 L16 12 L25 21.5 V17.5 L20 12 L25 6.5z" fill="#808080" stroke="#5e5e5e" stroke-width="0.7"/></svg>
<div class="a" style="left:840px;top:83px;width:1px;height:23px;background:#d2d2d2"></div>
<svg class="a" style="left:847px;top:83px" width="24" height="24" viewBox="0 0 24 24"><path d="M7.5 10 V7 Q7.5 2.5 12 2.5 Q16.5 2.5 16.5 7 V10" fill="none" stroke="#808080" stroke-width="2.6"/><rect x="4.5" y="10" width="15" height="13" rx="1" fill="#858585" stroke="#6a6a6a" stroke-width="0.8"/></svg>
<svg class="a" style="left:878px;top:83px" width="25" height="24" viewBox="0 0 25 24"><path d="M3 6 V18 M22 6 V18 M3 12 H22" fill="none" stroke="#5e5e5e" stroke-width="4.2"/><path d="M3 6 V18 M22 6 V18 M3 12 H22" fill="none" stroke="#808080" stroke-width="3.0"/></svg>
<svg class="a" style="left:908px;top:83px" width="24" height="24" viewBox="0 0 24 24"><path d="M6 3 H18 M6 21 H18 M12 3 V21" fill="none" stroke="#5e5e5e" stroke-width="4.2"/><path d="M6 3 H18 M6 21 H18 M12 3 V21" fill="none" stroke="#808080" stroke-width="3.0"/></svg>
<svg class="a" style="left:939px;top:83px" width="25" height="24" viewBox="0 0 25 24"><path d="M4.5 19.5 L20 4" stroke="#808080" stroke-width="3"/><path d="M22.5 1.5 L21 10 L14 3z M1.5 22.5 L3 14 L10 21z" fill="#808080" stroke="#5e5e5e" stroke-width="0.6"/></svg>
<svg class="a" style="left:971px;top:83px" width="24" height="24" viewBox="0 0 24 24"><circle cx="12" cy="12" r="9.8" fill="none" stroke="#5e5e5e" stroke-width="2.8"/><circle cx="12" cy="12" r="9.8" fill="none" stroke="#808080" stroke-width="1.6"/><path d="M11 13 L17.5 6.5" fill="none" stroke="#5e5e5e" stroke-width="2.8"/><path d="M11 13 L17.5 6.5" fill="none" stroke="#808080" stroke-width="1.5999999999999999"/></svg>
<svg class="a" style="left:1002px;top:83px" width="24" height="24" viewBox="0 0 24 24"><path d="M22 3 L2 12 L22 21" fill="none" stroke="#5e5e5e" stroke-width="3" stroke-linecap="round" stroke-linejoin="round"/><path d="M22 3 L2 12 L22 21" fill="none" stroke="#808080" stroke-width="1.8" stroke-linecap="round" stroke-linejoin="round"/><path d="M14 7 Q11 12 14 17" fill="none" stroke="#808080" stroke-width="2.2"/></svg>
<svg class="a" style="left:1032px;top:83px" width="25" height="24" viewBox="0 0 25 24"><path d="M2 3 L12 12 L14 22" fill="none" stroke="#8a8a8a" stroke-width="3" stroke-linecap="round"/><path d="M2 3 L12 12 L14 22" fill="none" stroke="#e4e4e4" stroke-width="1.6" stroke-linecap="round"/><path d="M1 12 H24" fill="none" stroke="#5e5e5e" stroke-width="3"/><path d="M1 12 H24" fill="none" stroke="#808080" stroke-width="1.8"/></svg>
<div class="a" style="left:1063px;top:83px;width:1px;height:23px;background:#d2d2d2"></div>
<svg class="a" style="left:1069px;top:83px" width="25" height="24" viewBox="0 0 25 24"><rect x="2.5" y="10.5" width="11" height="11" fill="none" stroke="#5e5e5e" stroke-width="2.6"/><rect x="10.5" y="2.5" width="11" height="11" fill="none" stroke="#5e5e5e" stroke-width="2.6"/><rect x="2.5" y="10.5" width="11" height="11" fill="none" stroke="#a8a8a8" stroke-width="1"/><rect x="10.5" y="2.5" width="11" height="11" fill="none" stroke="#a8a8a8" stroke-width="1"/></svg>
<div class="a" style="left:1112px;top:90px;width:118px;height:20px;background:rgba(0,0,0,0.12);filter:blur(1.5px)"></div>
<div class="a" style="left:1109px;top:87px;width:118px;height:20px;background:#fff;border:1px solid #767676"></div>
<div class="t" style="left:1116px;top:90px;color:#575757;transform:scaleX(0.95);transform-origin:0 0">Create a new sketch</div>

<div class="a" style="left:5px;top:117px;width:1px;height:1px;background:#b0b0b0"></div><div class="a" style="left:4px;top:118px;width:2px;height:1px;background:#a4a4a4"></div><div class="a" style="left:5px;top:121px;width:1px;height:1px;background:#b0b0b0"></div><div class="a" style="left:4px;top:122px;width:2px;height:1px;background:#a4a4a4"></div><div class="a" style="left:5px;top:125px;width:1px;height:1px;background:#b0b0b0"></div><div class="a" style="left:4px;top:126px;width:2px;height:1px;background:#a4a4a4"></div><div class="a" style="left:5px;top:129px;width:1px;height:1px;background:#b0b0b0"></div><div class="a" style="left:4px;top:130px;width:2px;height:1px;background:#a4a4a4"></div><div class="a" style="left:5px;top:133px;width:1px;height:1px;background:#b0b0b0"></div><div class="a" style="left:4px;top:134px;width:2px;height:1px;background:#a4a4a4"></div><div class="a" style="left:5px;top:137px;width:1px;height:1px;background:#b0b0b0"></div><div class="a" style="left:4px;top:138px;width:2px;height:1px;background:#a4a4a4"></div><div class="a" style="left:5px;top:141px;width:1px;height:1px;background:#b0b0b0"></div><div class="a" style="left:4px;top:142px;width:2px;height:1px;background:#a4a4a4"></div>
<svg class="a" style="left:13px;top:117px" width="25" height="24" viewBox="0 0 25 24"><path d="M4 4 Q1 12 4 20" fill="none" stroke="#5e5e5e" stroke-width="2.4" stroke-linecap="round"/><path d="M4 4 Q1 12 4 20" fill="none" stroke="#f4f4f4" stroke-width="1.0" stroke-linecap="round"/><path d="M21 4 V20" fill="none" stroke="#5e5e5e" stroke-width="2.4" stroke-linecap="round"/><path d="M21 4 V20" fill="none" stroke="#f4f4f4" stroke-width="1.0" stroke-linecap="round"/><circle cx="5" cy="4" r="3.6" fill="#a0a0a0" stroke="#7a7a7a" stroke-width="0.7"/><circle cx="21" cy="4" r="3.6" fill="#a0a0a0" stroke="#7a7a7a" stroke-width="0.7"/><circle cx="5" cy="20" r="3.6" fill="#a0a0a0" stroke="#7a7a7a" stroke-width="0.7"/><circle cx="21" cy="20" r="3.6" fill="#a0a0a0" stroke="#7a7a7a" stroke-width="0.7"/><path d="M17 9 H10 M17 15 H10" stroke="#5e5e5e" stroke-width="2"/><path d="M8 9 l3.5-2.5v5z M8 15 l3.5-2.5v5z" fill="#5e5e5e"/></svg>
<svg class="a" style="left:43px;top:117px" width="25" height="24" viewBox="0 0 25 24"><path d="M5 4 Q2 12 5 20" fill="none" stroke="#5e5e5e" stroke-width="2.4" stroke-linecap="round"/><path d="M5 4 Q2 12 5 20" fill="none" stroke="#f4f4f4" stroke-width="1.0" stroke-linecap="round"/><path d="M19 4 V20" fill="none" stroke="#5e5e5e" stroke-width="2.4" stroke-linecap="round"/><path d="M19 4 V20" fill="none" stroke="#f4f4f4" stroke-width="1.0" stroke-linecap="round"/><circle cx="5" cy="4" r="3.6" fill="#a0a0a0" stroke="#7a7a7a" stroke-width="0.7"/><circle cx="19" cy="4" r="3.6" fill="#a0a0a0" stroke="#7a7a7a" stroke-width="0.7"/><circle cx="5" cy="20" r="3.6" fill="#808080" stroke="#5e5e5e" stroke-width="0.7"/><circle cx="19" cy="16" r="3.6" fill="#808080" stroke="#5e5e5e" stroke-width="0.7"/><path d="M16 9 H10" stroke="#5e5e5e" stroke-width="2"/><path d="M8 9 l3.5-2.5v5z" fill="#5e5e5e"/></svg>
<svg class="a" style="left:74px;top:117px" width="25" height="24" viewBox="0 0 25 24"><path d="M3 3 V21" fill="none" stroke="#5e5e5e" stroke-width="2.6" stroke-linecap="round"/><path d="M3 3 V21" fill="none" stroke="#f4f4f4" stroke-width="1.2000000000000002" stroke-linecap="round"/><circle cx="3" cy="3" r="2.2" fill="#a0a0a0" stroke="#7a7a7a" stroke-width="0.7"/><circle cx="3" cy="21" r="2.2" fill="#a0a0a0" stroke="#7a7a7a" stroke-width="0.7"/><rect x="6" y="8" width="3" height="11" fill="#c0c0c0" stroke="#7a7a7a" stroke-width="0.8"/><path d="M10 9 L20 1 M10 13 L21 5" fill="none" stroke="#5e5e5e" stroke-width="2.4"/><path d="M10 9 L20 1 M10 13 L21 5" fill="none" stroke="#808080" stroke-width="1.2"/><path d="M10 14 L16 19 L10 23 M22 14 L16 19 L22 23" fill="none" stroke="#a0a0a0" stroke-width="2"/></svg>
<svg class="a" style="left:105px;top:117px" width="25" height="24" viewBox="0 0 25 24"><path d="M3 3 V21" fill="none" stroke="#5e5e5e" stroke-width="2.6" stroke-linecap="round"/><path d="M3 3 V21" fill="none" stroke="#f4f4f4" stroke-width="1.2000000000000002" stroke-linecap="round"/><circle cx="3" cy="3" r="2.2" fill="#a0a0a0" stroke="#7a7a7a" stroke-width="0.7"/><circle cx="3" cy="21" r="2.2" fill="#a0a0a0" stroke="#7a7a7a" stroke-width="0.7"/><path d="M21 3 V21" fill="none" stroke="#5e5e5e" stroke-width="2.6" stroke-linecap="round"/><path d="M21 3 V21" fill="none" stroke="#f4f4f4" stroke-width="1.2000000000000002" stroke-linecap="round"/><circle cx="21" cy="3" r="2.2" fill="#a0a0a0" stroke="#7a7a7a" stroke-width="0.7"/><circle cx="21" cy="21" r="2.2" fill="#a0a0a0" stroke="#7a7a7a" stroke-width="0.7"/><path d="M6 10 L15 2 M7 14 L16 6" fill="none" stroke="#5e5e5e" stroke-width="2.4"/><path d="M6 10 L15 2 M7 14 L16 6" fill="none" stroke="#808080" stroke-width="1.2"/><path d="M15 11 V22" fill="none" stroke="#5e5e5e" stroke-width="2.6"/><path d="M15 11 V22" fill="none" stroke="#808080" stroke-width="1.4000000000000001"/></svg>
<svg class="a" style="left:136px;top:117px" width="25" height="24" viewBox="0 0 25 24"><ellipse cx="12.5" cy="12" rx="11" ry="6.5" transform="rotate(-40 12.5 12)" fill="none" stroke="#8a8a8a" stroke-width="0.9"/><ellipse cx="12.5" cy="12" rx="8.5" ry="4.5" transform="rotate(-40 12.5 12)" fill="#e0e0e0" stroke="#8a8a8a" stroke-width="0.9"/><path d="M6 8 L19 16 M6 16 L19 8" stroke="#9a9a9a" stroke-width="2.6"/></svg>
<svg class="a" style="left:167px;top:117px" width="25" height="24" viewBox="0 0 25 24"><path d="M5 4 Q2 12 5 20" fill="none" stroke="#5e5e5e" stroke-width="2.4" stroke-linecap="round"/><path d="M5 4 Q2 12 5 20" fill="none" stroke="#f4f4f4" stroke-width="1.0" stroke-linecap="round"/><path d="M20 4 Q23 12 20 20" fill="none" stroke="#5e5e5e" stroke-width="2.4" stroke-linecap="round"/><path d="M20 4 Q23 12 20 20" fill="none" stroke="#f4f4f4" stroke-width="1.0" stroke-linecap="round"/><circle cx="5" cy="4" r="3.6" fill="#808080" stroke="#5e5e5e" stroke-width="0.7"/><circle cx="20" cy="4" r="3.6" fill="#808080" stroke="#5e5e5e" stroke-width="0.7"/><circle cx="5" cy="20" r="3.6" fill="#808080" stroke="#5e5e5e" stroke-width="0.7"/><circle cx="20" cy="20" r="3.6" fill="#808080" stroke="#5e5e5e" stroke-width="0.7"/><path d="M12.5 8 V16" fill="none" stroke="#5e5e5e" stroke-width="2" stroke-linecap="round"/><path d="M12.5 8 V16" fill="none" stroke="#f4f4f4" stroke-width="0.6000000000000001" stroke-linecap="round"/><circle cx="12.5" cy="8" r="2.2" fill="#808080" stroke="#5e5e5e" stroke-width="0.7"/><circle cx="12.5" cy="16" r="2.2" fill="#808080" stroke="#5e5e5e" stroke-width="0.7"/></svg>
<svg class="a" style="left:198px;top:117px" width="25" height="24" viewBox="0 0 25 24"><path d="M1 3 H6 M1 7 H6" stroke="#808080" stroke-width="2"/><path d="M11 4 Q6 12 11 20" fill="none" stroke="#5e5e5e" stroke-width="2.4" stroke-linecap="round"/><path d="M11 4 Q6 12 11 20" fill="none" stroke="#f4f4f4" stroke-width="1.0" stroke-linecap="round"/><path d="M18 4 Q13 12 18 20" fill="none" stroke="#5e5e5e" stroke-width="2.4" stroke-linecap="round"/><path d="M18 4 Q13 12 18 20" fill="none" stroke="#f4f4f4" stroke-width="1.0" stroke-linecap="round"/><circle cx="10" cy="4" r="3.6" fill="#808080" stroke="#5e5e5e" stroke-width="0.7"/><circle cx="17" cy="4" r="3.6" fill="#808080" stroke="#5e5e5e" stroke-width="0.7"/><circle cx="10" cy="20" r="3.6" fill="#808080" stroke="#5e5e5e" stroke-width="0.7"/><circle cx="17" cy="20" r="3.6" fill="#808080" stroke="#5e5e5e" stroke-width="0.7"/></svg>
<svg class="a" style="left:228px;top:127px" width="8" height="5" viewBox="0 0 8 5"><path d="M0 0h8l-4 4.5z" fill="#6a6a6a"/></svg>
<svg class="a" style="left:241px;top:117px" width="25" height="24" viewBox="0 0 25 24"><path d="M3 21 V14" fill="none" stroke="#5e5e5e" stroke-width="3" stroke-linecap="round"/><path d="M3 21 V14" fill="none" stroke="#f4f4f4" stroke-width="1.6" stroke-linecap="round"/><path d="M8.5 17 V10" fill="none" stroke="#5e5e5e" stroke-width="3" stroke-linecap="round"/><path d="M8.5 17 V10" fill="none" stroke="#f4f4f4" stroke-width="1.6" stroke-linecap="round"/><path d="M14 13 V6" fill="none" stroke="#5e5e5e" stroke-width="3" stroke-linecap="round"/><path d="M14 13 V6" fill="none" stroke="#f4f4f4" stroke-width="1.6" stroke-linecap="round"/><path d="M19.5 9 V2" fill="none" stroke="#5e5e5e" stroke-width="3" stroke-linecap="round"/><path d="M19.5 9 V2" fill="none" stroke="#f4f4f4" stroke-width="1.6" stroke-linecap="round"/><circle cx="3" cy="21" r="2.3" fill="#808080" stroke="#5e5e5e" stroke-width="0.7"/><circle cx="3" cy="14" r="2.3" fill="#808080" stroke="#5e5e5e" stroke-width="0.7"/><circle cx="8.5" cy="17" r="2.3" fill="#808080" stroke="#5e5e5e" stroke-width="0.7"/><circle cx="8.5" cy="10" r="2.3" fill="#808080" stroke="#5e5e5e" stroke-width="0.7"/><circle cx="14" cy="13" r="2.3" fill="#808080" stroke="#5e5e5e" stroke-width="0.7"/><circle cx="14" cy="6" r="2.3" fill="#808080" stroke="#5e5e5e" stroke-width="0.7"/><circle cx="19.5" cy="9" r="2.3" fill="#808080" stroke="#5e5e5e" stroke-width="0.7"/><circle cx="19.5" cy="2" r="2.3" fill="#808080" stroke="#5e5e5e" stroke-width="0.7"/></svg>
<div class="a" style="left:272px;top:112px;width:1px;height:33px;background:#c4c4c4"></div><div class="a" style="left:273px;top:112px;width:1px;height:33px;background:#fff"></div>
<div class="a" style="left:277px;top:117px;width:1px;height:1px;background:#b0b0b0"></div><div class="a" style="left:276px;top:118px;width:2px;height:1px;background:#a4a4a4"></div><div class="a" style="left:277px;top:121px;width:1px;height:1px;background:#b0b0b0"></div><div class="a" style="left:276px;top:122px;width:2px;height:1px;background:#a4a4a4"></div><div class="a" style="left:277px;top:125px;width:1px;height:1px;background:#b0b0b0"></div><div class="a" style="left:276px;top:126px;width:2px;height:1px;background:#a4a4a4"></div><div class="a" style="left:277px;top:129px;width:1px;height:1px;background:#b0b0b0"></div><div class="a" style="left:276px;top:130px;width:2px;height:1px;background:#a4a4a4"></div><div class="a" style="left:277px;top:133px;width:1px;height:1px;background:#b0b0b0"></div><div class="a" style="left:276px;top:134px;width:2px;height:1px;background:#a4a4a4"></div><div class="a" style="left:277px;top:137px;width:1px;height:1px;background:#b0b0b0"></div><div class="a" style="left:276px;top:138px;width:2px;height:1px;background:#a4a4a4"></div><div class="a" style="left:277px;top:141px;width:1px;height:1px;background:#b0b0b0"></div><div class="a" style="left:276px;top:142px;width:2px;height:1px;background:#a4a4a4"></div>
<svg class="a" style="left:284px;top:117px" width="25" height="24" viewBox="0 0 25 24"><path d="M5 5 L19.5 3 L17.5 17.5 L3 19z" fill="#a4a4a4" stroke="#7a7a7a" stroke-width="1.2"/><path d="M9 15 Q6 13 9 9 L13 6 Q17 5 15 9 L11 14 Q10 16 9 15z" fill="#e8e8e8" stroke="#777" stroke-width="0.8"/><circle cx="5" cy="5" r="3" fill="#808080" stroke="#5e5e5e" stroke-width="0.7"/><circle cx="19.5" cy="3" r="3" fill="#808080" stroke="#5e5e5e" stroke-width="0.7"/><circle cx="17.5" cy="17.5" r="3" fill="#808080" stroke="#5e5e5e" stroke-width="0.7"/><circle cx="3" cy="19" r="3" fill="#808080" stroke="#5e5e5e" stroke-width="0.7"/></svg>
<svg class="a" style="left:315px;top:127px" width="8" height="5" viewBox="0 0 8 5"><path d="M0 0h8l-4 4.5z" fill="#6a6a6a"/></svg>
<svg class="a" style="left:327px;top:117px" width="25" height="24" viewBox="0 0 25 24"><circle cx="12" cy="12" r="9" fill="none" stroke="#9a9a9a" stroke-width="2.4" stroke-dasharray="3.5 3"/><circle cx="12" cy="12" r="9" fill="none" stroke="#e8e8e8" stroke-width="1" stroke-dasharray="3.5 3"/><circle cx="8" cy="3" r="2.2" fill="#808080" stroke="#5e5e5e" stroke-width="0.7"/><circle cx="14" cy="3" r="2.2" fill="#808080" stroke="#5e5e5e" stroke-width="0.7"/><circle cx="19" cy="7" r="2.2" fill="#808080" stroke="#5e5e5e" stroke-width="0.7"/><circle cx="20" cy="14" r="2.2" fill="#808080" stroke="#5e5e5e" stroke-width="0.7"/></svg>
<svg class="a" style="left:358px;top:117px" width="25" height="24" viewBox="0 0 25 24"><path d="M5 2 V15 M11 2 V15 M1 6 H15 M1 11 H15" stroke="#7a7a7a" stroke-width="3.4"/><path d="M5 2 V15 M11 2 V15 M1 6 H15 M1 11 H15" stroke="#9a9a9a" stroke-width="2.2"/><path d="M11 21 V12 M11 16 L21 15" fill="none" stroke="#5e5e5e" stroke-width="2" stroke-linecap="round"/><path d="M11 21 V12 M11 16 L21 15" fill="none" stroke="#f4f4f4" stroke-width="0.6000000000000001" stroke-linecap="round"/><circle cx="11" cy="21" r="2.2" fill="#808080" stroke="#5e5e5e" stroke-width="0.7"/><circle cx="21" cy="15" r="2.2" fill="#808080" stroke="#5e5e5e" stroke-width="0.7"/><circle cx="20" cy="8" r="2.2" fill="#808080" stroke="#5e5e5e" stroke-width="0.7"/></svg>
<svg class="a" style="left:389px;top:117px" width="25" height="24" viewBox="0 0 25 24"><path d="M5 2 V15 M11 2 V15 M1 6 H15 M1 11 H15" stroke="#7a7a7a" stroke-width="3.4"/><path d="M5 2 V15 M11 2 V15 M1 6 H15 M1 11 H15" stroke="#9a9a9a" stroke-width="2.2"/><path d="M11 21 V12 M13 14 L20 8" fill="none" stroke="#5e5e5e" stroke-width="2" stroke-linecap="round"/><path d="M11 21 V12 M13 14 L20 8" fill="none" stroke="#f4f4f4" stroke-width="0.6000000000000001" stroke-linecap="round"/><circle cx="11" cy="21" r="2.2" fill="#808080" stroke="#5e5e5e" stroke-width="0.7"/><circle cx="20" cy="15" r="2.2" fill="#808080" stroke="#5e5e5e" stroke-width="0.7"/><circle cx="20" cy="8" r="2.2" fill="#808080" stroke="#5e5e5e" stroke-width="0.7"/><circle cx="13" cy="14" r="2.2" fill="#808080" stroke="#5e5e5e" stroke-width="0.7"/></svg>
<svg class="a" style="left:420px;top:127px" width="8" height="5" viewBox="0 0 8 5"><path d="M0 0h8l-4 4.5z" fill="#6a6a6a"/></svg>


<!-- 3D view -->
<div id="view3d" class="a">
  <div class="gv" style="left:110px"></div>
  <div class="gv" style="left:226px"></div>
  <div class="gv" style="left:342px"></div>
  <div class="gv" style="left:458px;background:rgba(30,40,60,0.8)"></div>
  <div class="gv" style="left:574px"></div>
  <div class="gv" style="left:690px"></div>
  <div class="gv" style="left:806px"></div>
  <div class="gh" style="top:124px"></div>
  <div class="gh" style="top:240px;background:rgba(30,40,60,0.8)"></div>
  <div class="gh" style="top:356px"></div>
  <div class="gh" style="top:472px"></div>
</div>


<!-- title controls -->
<div class="a" style="left:1159px;top:10px;width:10px;height:1px;background:#fff"></div>
<div class="a" style="left:1204px;top:7px;width:8px;height:8px;border:1px solid #fff"></div>
<div class="a" style="left:1206px;top:5px;width:8px;height:8px;border-top:1px solid #fff;border-right:1px solid #fff"></div>
<svg class="a" style="left:1249px;top:4px" width="12" height="12"><path d="M1 1L11 11M11 1L1 11" stroke="#fff" stroke-width="1.1"/></svg>
<!-- app icon -->
<svg class="a" style="left:2px;top:3px" width="18" height="17" viewBox="0 0 18 17">
<path d="M0.5 0.5h10v4H4.2v2.2h4v3H4.2v5.8H0.5z" fill="#e01010" stroke="#3a4a20" stroke-width="0.5"/>
<path d="M10.50 4.20 L12.15 6.53 L14.95 6.05 L14.47 8.85 L16.80 10.50 L14.47 12.15 L14.95 14.95 L12.15 14.47 L10.50 16.80 L8.85 14.47 L6.05 14.95 L6.53 12.15 L4.20 10.50 L6.53 8.85 L6.05 6.05 L8.85 6.53z" fill="#6a9ee0" stroke="#233a88" stroke-width="0.9" stroke-linejoin="round"/>
<rect x="8.8" y="8.8" width="3.4" height="3.4" fill="#9a9a9a" stroke="#233a88" stroke-width="1"/>
</svg>

<!-- combo view panel -->
<div class="a" style="left:0;top:147px;width:359px;height:19px;background:#dcdcdc;border:1px solid #c4c4c4;border-left:none"></div>
<div class="t" style="left:2px;top:150px;transform:scaleX(0.85);transform-origin:0 0">Combo View</div>
<svg class="a" style="left:329px;top:151px" width="10" height="10"><rect x="1" y="4" width="6" height="5.5" fill="#dcdcdc" stroke="#000"/><path d="M1 5.2h6" stroke="#000" stroke-width="1.5"/><path d="M3.5 3.5V1h5.5v5h-2" fill="none" stroke="#000"/><path d="M3.5 1.7h5.5" stroke="#000" stroke-width="1.4"/></svg>
<svg class="a" style="left:345px;top:152px" width="10" height="10"><path d="M1.5 1.5L8.5 8.5M8.5 1.5L1.5 8.5" stroke="#000" stroke-width="1.5"/></svg>

<!-- tabs -->
<div class="a" style="left:54px;top:170px;width:45px;height:20px;background:#f0f0f0;border:1px solid #d9d9d9;border-bottom:none"></div>
<div class="t" style="left:63px;top:173px;transform:scaleX(0.86);transform-origin:0 0">Tasks</div>
<div class="a" style="left:0;top:168px;width:54px;height:23px;background:#fff;border:1px solid #d9d9d9;border-bottom:none;border-left:none"></div>
<div class="t" style="left:11px;top:172px;transform:scaleX(0.86);transform-origin:0 0">Model</div>

<!-- tree -->
<div class="a" style="left:2px;top:190px;width:353px;height:214px;background:#fff;border:1px solid #828790"></div>
<div class="a" style="left:117px;top:191px;width:1px;height:23px;background:#e5e5e5"></div>
<div class="t" style="left:7px;top:196px">Labels &amp; Attributes</div>
<div class="t" style="left:6px;top:216px;transform:scaleX(1.03);transform-origin:0 0">Application</div>
<svg class="a" style="left:7px;top:236px" width="11" height="8"><path d="M1.2 1.5l4.3 4.3 4.3-4.3" fill="none" stroke="#404038" stroke-width="1.7"/></svg>
<div class="a" style="left:27px;top:232px;width:14px;height:16px;border:1px solid #a8a8a8;background:#efefef;border-radius:2px"></div>
<svg class="a" style="left:27px;top:232px" width="14" height="16"><path d="M3 7.5 L7 5.5 L10.5 7.5 V12.5 L7 14.5 L3 12.5z" fill="#3a6cc0" stroke="#1d3f88" stroke-width="0.6"/><path d="M3 7.5 L7 9.5 L10.5 7.5 M7 9.5 V14.5" stroke="#6a9ae0" stroke-width="0.6" fill="none"/><circle cx="10" cy="4.8" r="2.9" fill="#e01818"/></svg>
<div class="t" style="left:48px;top:234px;font-weight:bold">Tutorial</div>
<div class="a" style="left:43px;top:249px;width:75px;height:18px;background:#d9d9d9"></div>
<svg class="a" style="left:46px;top:252px" width="17" height="14" shape-rendering="crispEdges"><rect x="0" y="0" width="16" height="13" fill="#1a1a1a"/><rect x="1" y="1" width="4" height="2" fill="#c4f0ff"/><rect x="6" y="1" width="4" height="2" fill="#c4f0ff"/><rect x="11" y="1" width="4" height="2" fill="#c4f0ff"/><rect x="1" y="4" width="4" height="2" fill="#c4f0ff"/><rect x="6" y="4" width="4" height="2" fill="#c4f0ff"/><rect x="11" y="4" width="4" height="2" fill="#c4f0ff"/><rect x="1" y="7" width="4" height="2" fill="#c4f0ff"/><rect x="6" y="7" width="4" height="2" fill="#c4f0ff"/><rect x="11" y="7" width="4" height="2" fill="#c4f0ff"/><rect x="1" y="10" width="4" height="2" fill="#c4f0ff"/><rect x="6" y="10" width="4" height="2" fill="#c4f0ff"/><rect x="11" y="10" width="4" height="2" fill="#c4f0ff"/></svg>
<div class="t" style="left:68px;top:252px;font-weight:bold;transform:scaleX(0.94);transform-origin:0 0">Dims</div>

<!-- property view -->
<div class="a" style="left:3px;top:410px;width:350px;height:221px;border:1px solid #dcdcdc"></div>
<div class="a" style="left:4px;top:411px;width:347px;height:219px;background:#fff;border:1px solid #828790"></div>
<div class="a" style="left:104px;top:412px;width:1px;height:23px;background:#e5e5e5"></div>
<div class="t" style="left:9px;top:417px">Property</div>
<div class="t" style="left:109px;top:417px">Value</div>
<div class="a" style="left:5px;top:435px;width:344px;height:20px;background:#a0a0a0"></div>
<div class="t" style="left:28px;top:439px;font-weight:bold;color:#fff;transform:scaleX(0.88);transform-origin:0 0">Base</div>
<div class="a" style="left:5px;top:455px;width:344px;height:20px;background:#f1f1f1"></div>
<div class="a" style="left:5px;top:495px;width:344px;height:20px;background:#f1f1f1"></div>
<div class="a" style="left:25px;top:474px;width:324px;height:1px;background:#dcdcdc"></div>
<div class="a" style="left:25px;top:494px;width:324px;height:1px;background:#dcdcdc"></div>
<div class="a" style="left:25px;top:514px;width:324px;height:1px;background:#dcdcdc"></div>
<div class="a" style="left:104px;top:455px;width:1px;height:60px;background:#dcdcdc"></div>
<div class="t" style="left:28px;top:459px;transform:scaleX(0.92);transform-origin:0 0">Label</div>
<div class="t" style="left:108px;top:459px">Dims</div>
<div class="t" style="left:28px;top:479px;transform:scaleX(0.95);transform-origin:0 0">hex_diam</div>
<div class="t" style="left:108px;top:479px;transform:scaleX(0.96);transform-origin:0 0">8.00 mm</div>
<div class="t" style="left:28px;top:499px">gap</div>
<div class="t" style="left:108px;top:499px;transform:scaleX(0.96);transform-origin:0 0">3.00 mm</div>

<!-- view/data tabs -->
<svg class="a" style="left:0;top:630px" width="200" height="20">
<path d="M3 1.5 Q5 14 8 15.5 H41 Q44 14 46 1.5" fill="#f0f0f0" stroke="#404040" stroke-width="1"/>
<path d="M48 1.5 Q50 16 56 17.5 H87 Q90 16 93 1.5" fill="#fff" stroke="#404040" stroke-width="1"/>
</svg>
<div class="t" style="left:13px;top:632px;transform:scaleX(0.9);transform-origin:0 0">View</div>
<div class="t" style="left:59px;top:633px">Data</div>
<div class="a" style="left:0;top:649px;width:359px;height:1px;background:#fbfbfb"></div>
<div class="a" style="left:356px;top:188px;width:1px;height:462px;background:#fbfbfb"></div>

<!-- mdi tabs -->
<div class="a" style="left:365px;top:628px;width:112px;height:21px;background:#f0f0f0;border:1px solid #d9d9d9;border-top:none"></div>
<svg class="a" style="left:375px;top:629px" width="16" height="16"><defs><radialGradient id="gl" cx="0.4" cy="0.3" r="0.75"><stop offset="0" stop-color="#b8dcff"/><stop offset="0.55" stop-color="#4a90e0"/><stop offset="1" stop-color="#1d56b0"/></radialGradient></defs><circle cx="8" cy="8" r="7" fill="url(#gl)"/><path d="M4 3.5 Q7 3 8 5 Q6.5 7 5 6.5z M9 8 Q12 7.5 12.5 10 Q11 13.5 9 13 Q10 11 9 8z" fill="#e8f4ff"/><ellipse cx="8" cy="14.5" rx="5" ry="1" fill="#8ab0d8" opacity="0.6"/></svg>
<div class="t" style="left:394px;top:632px;transform:scaleX(0.92);transform-origin:0 0">Start page</div>
<div class="a" style="left:450px;top:631px;width:14px;height:14px;background:#c4c4c4;border:1px solid #a8a8a8;border-radius:2px"></div>
<svg class="a" style="left:450px;top:631px" width="14" height="14"><path d="M4 4l6 6M10 4l-6 6" stroke="#fff" stroke-width="2"/></svg>
<div class="a" style="left:476px;top:627px;width:117px;height:23px;background:#fff;border:1px solid #d9d9d9;border-top:none"></div>
<svg class="a" style="left:489px;top:630px" width="18" height="17" viewBox="0 0 18 17">
<path d="M0.5 0.5h10v4H4.2v2.2h4v3H4.2v5.8H0.5z" fill="#e01010" stroke="#3a4a20" stroke-width="0.5"/>
<path d="M10.50 4.20 L12.15 6.53 L14.95 6.05 L14.47 8.85 L16.80 10.50 L14.47 12.15 L14.95 14.95 L12.15 14.47 L10.50 16.80 L8.85 14.47 L6.05 14.95 L6.53 12.15 L4.20 10.50 L6.53 8.85 L6.05 6.05 L8.85 6.53z" fill="#6a9ee0" stroke="#233a88" stroke-width="0.9" stroke-linejoin="round"/>
<rect x="8.8" y="8.8" width="3.4" height="3.4" fill="#fff" stroke="#233a88" stroke-width="1"/>
</svg>
<div class="t" style="left:509px;top:632px;transform:scaleX(0.91);transform-origin:0 0">Tutorial : 1</div>
<div class="a" style="left:565px;top:632px;width:14px;height:14px;background:#d89a66;border:1px dotted #e01010;border-radius:2px"></div>
<svg class="a" style="left:565px;top:632px" width="14" height="14"><path d="M4 4l6 6M10 4l-6 6" stroke="#fff" stroke-width="2"/></svg>

<!-- status bar -->
<div class="t" style="left:6px;top:659px;transform:scaleX(0.95);transform-origin:0 0">Create a new sketch</div>
<svg class="a" style="left:1083px;top:657px" width="16" height="17"><path d="M4 6q2-4 8-3M12 11q-2 4-8 3" stroke="#505050" stroke-width="2" fill="none"/><circle cx="12" cy="4" r="2.8" fill="#2a2a2a"/><circle cx="4" cy="13" r="2.8" fill="#2a2a2a"/></svg>
<div class="t" style="left:1103px;top:659px;transform:scaleX(0.95);transform-origin:0 0">Gestur</div>
<svg class="a" style="left:1138px;top:663px" width="9" height="6"><path d="M0 0h8l-4 5z" fill="#000"/></svg>
<div class="a" style="left:1154px;top:653px;width:1px;height:24px;background:#d8d8d8"></div>
<div class="t" style="left:1159px;top:659px;transform:scaleX(0.97);transform-origin:0 0">7.90 mm x 4.14 mm</div>


<svg class="a" style="left:1246px;top:576px" width="34" height="32">
<path d="M10 27 V10" stroke="#2a6a4a" stroke-width="1.6"/><path d="M8 14 h4" stroke="#2a6a4a" stroke-width="1.4"/>
<path d="M10 27 H27" stroke="#c01818" stroke-width="1.8"/><circle cx="22" cy="27" r="1.4" fill="#c01818"/>
<circle cx="10" cy="27" r="1.8" fill="#2040b0"/>
<path d="M13 5 l2.5 3 l2.5-3 M15.5 8 v3" fill="none" stroke="#111" stroke-width="1"/>
<path d="M13 20 h5 l-5 6 h5" fill="none" stroke="#111" stroke-width="1"/>
<path d="M29 22 l5 5 M34 22 l-5 5" fill="none" stroke="#111" stroke-width="1"/>
</svg>
<!-- taskbar -->
<div id="taskbar" class="a"></div>
<svg class="a" style="left:0;top:680px" width="1280" height="40"><filter id="nz" x="0" y="0" width="100%" height="100%"><feTurbulence type="fractalNoise" baseFrequency="0.18" numOctaves="3" seed="11"/><feColorMatrix values="0 0 0 0 0.22  0 0 0 0 0.25  0 0 0 0 0.19  0 0 0 2.2 -1.0"/></filter><rect width="1280" height="40" filter="url(#nz)" opacity="0.22"/></svg>
<svg class="a" style="left:15px;top:691px" width="18" height="18" viewBox="0 0 18 18"><path d="M1 3 L7.5 2 V8.5 H1z M8.5 1.8 L17 0.5 V8.5 H8.5z M1 9.5 H7.5 V16 L1 15z M8.5 9.5 H17 V17.5 L8.5 16.2z" fill="#fff"/></svg>
<svg class="a" style="left:61px;top:692px" width="22" height="16" viewBox="0 0 22 16"><rect x="5.5" y="1.5" width="11" height="13" fill="none" stroke="#fff" stroke-width="1.3"/><path d="M3 3.5 H1.5 V12.5 H3 M19 3.5 H20.5 V12.5 H19" fill="none" stroke="#fff" stroke-width="1.2"/></svg>
<svg class="a" style="left:111px;top:687px" width="23" height="25" viewBox="0 0 23 25"><path d="M7 6 Q7 1.5 11.5 1.5 Q16 1.5 16 6" fill="none" stroke="#fff" stroke-width="1.4"/><path d="M2 6 H21 V23.5 L2 22z" fill="#fff"/><path d="M5.5 11 H10.5 V15 H5.5z M11.8 11 H16.8 V15 H11.8z M5.5 16.3 H10.5 V20 H5.5z M11.8 16.3 H16.8 V20 H11.8z" fill="#1f1f1d"/></svg>
<svg class="a" style="left:160px;top:689px" width="24" height="23" viewBox="0 0 24 23"><rect x="5" y="1" width="14" height="16" fill="#2a3040"/><path d="M8 2 V16 M11 2 V16 M14 2 V16 M17 2 V16" stroke="#4a5a80" stroke-width="1.2" stroke-dasharray="1 1"/><path d="M2 13 V19 Q2 21 4 21 H20 Q22 21 22 19 V13" fill="none" stroke="#d08a20" stroke-width="2.2"/><rect x="6" y="15" width="4" height="2" fill="#c02020"/><rect x="13" y="13" width="5" height="5" fill="#8a8a8a"/></svg>
<svg class="a" style="left:209px;top:689px" width="24" height="24" viewBox="0 0 24 24"><circle cx="12" cy="12" r="11" fill="#e04a3a"/><path d="M12 12 L2.5 6.5 A11 11 0 0 0 12 23z" fill="#2e9a50"/><path d="M12 12 L12 23 A11 11 0 0 0 21.5 6.5z" fill="#f5c030"/><path d="M12 12 L21.5 6.5 A11 11 0 0 0 2.5 6.5z" fill="#e04a3a"/><circle cx="12" cy="12" r="5.2" fill="#fff"/><circle cx="12" cy="12" r="4.2" fill="#4a86e0"/></svg>
<svg class="a" style="left:258px;top:689px" width="24" height="22" viewBox="0 0 24 22"><path d="M1 3 H9 L11 5 H23 V20 H1z" fill="#e8b840"/><rect x="1" y="7" width="22" height="13" fill="#f8d878"/><rect x="6" y="11" width="12" height="3" fill="#2a90d8"/><rect x="8" y="14" width="2.5" height="5" fill="#2a90d8"/><rect x="13.5" y="14" width="2.5" height="5" fill="#2a90d8"/></svg>
<svg class="a" style="left:307px;top:688px" width="24" height="24" viewBox="0 0 24 24"><rect x="0" y="0" width="24" height="24" fill="#c81e1e"/><path d="M0 12 H24 V24 H0z" fill="#a41414"/><path d="M5 19 V6 H8 L12 13 L16 6 H19 V19 H16.5 V10.5 L12.8 17 H11.2 L7.5 10.5 V19z" fill="#fff"/></svg>
<div class="a" style="left:344px;top:680px;width:48px;height:40px;background:#4a4a48"></div>
<svg class="a" style="left:355px;top:688px" width="26" height="24" viewBox="0 0 26 24"><path d="M1 1 H15 V6.5 H6.5 V9.5 H12 V13.5 H6.5 V22 H1z" fill="#e01010" stroke="#4a1010" stroke-width="0.6"/><path d="M16.00 7.00 L18.14 9.83 L21.66 9.34 L21.17 12.86 L24.00 15.00 L21.17 17.14 L21.66 20.66 L18.14 20.17 L16.00 23.00 L13.86 20.17 L10.34 20.66 L10.83 17.14 L8.00 15.00 L10.83 12.86 L10.34 9.34 L13.86 9.83z" fill="#5a8ee0" stroke="#1d3480" stroke-width="1.1" stroke-linejoin="round"/><rect x="13.5" y="12.5" width="5" height="5" fill="#4a4a48" stroke="#1d3480" stroke-width="1.2"/></svg>
<svg class="a" style="left:404px;top:688px" width="25" height="24" viewBox="0 0 25 24"><rect x="8" y="3" width="16" height="18" fill="#fff" stroke="#2b5797" stroke-width="1"/><path d="M11 7 H22 M11 10 H22 M11 13 H22 M11 16 H22" stroke="#2b5797" stroke-width="1.2"/><path d="M0 2.5 L14 0 V24 L0 21.5z" fill="#2b5797"/><path d="M2.5 8 L4.5 16 L6.5 10 L8.5 16 L10.5 8" fill="none" stroke="#fff" stroke-width="1.4"/></svg>
<svg class="a" style="left:453px;top:688px" width="26" height="24" viewBox="0 0 26 24"><defs><radialGradient id="ga" cx="0.4" cy="0.35" r="0.7"><stop offset="0" stop-color="#f8f8f8"/><stop offset="0.7" stop-color="#b8c4cc"/><stop offset="1" stop-color="#6a7a84"/></radialGradient></defs><circle cx="13" cy="12" r="11.5" fill="url(#ga)"/><rect x="7" y="4" width="12" height="3" fill="#505a60"/><path d="M9 12 L13 9 L17 12 L13 19z" fill="#2a80d0"/></svg>
<div class="a" style="left:201px;top:718px;width:40px;height:2px;background:#a8a8a8"></div><div class="a" style="left:250px;top:718px;width:40px;height:2px;background:#a8a8a8"></div><div class="a" style="left:299px;top:718px;width:40px;height:2px;background:#a8a8a8"></div><div class="a" style="left:344px;top:718px;width:48px;height:2px;background:#c8c8c8"></div><div class="a" style="left:397px;top:718px;width:40px;height:2px;background:#a8a8a8"></div><div class="a" style="left:446px;top:718px;width:40px;height:2px;background:#a8a8a8"></div>
<svg class="a" style="left:954px;top:694px" width="15" height="10" viewBox="0 0 15 10"><path d="M1 8.5 L7.5 2 L14 8.5" fill="none" stroke="#fff" stroke-width="1.3"/></svg>
<svg class="a" style="left:987px;top:691px" width="15" height="15" viewBox="0 0 15 15"><path d="M2 13 A11 11 0 0 1 13 2 M4.5 13 A8.5 8.5 0 0 1 13 4.5 M7 13 A6 6 0 0 1 13 7 M9.5 13 A3.5 3.5 0 0 1 13 9.5" fill="none" stroke="#d8d8d8" stroke-width="1"/><circle cx="12.5" cy="12.5" r="1.6" fill="#fff"/></svg>
<svg class="a" style="left:1016px;top:692px" width="18" height="16" viewBox="0 0 18 16"><path d="M1.5 5.5 H4.5 L9 1.5 V14.5 L4.5 10.5 H1.5z" fill="none" stroke="#fff" stroke-width="1.1"/><path d="M11.5 5.5 L16 10.5 M16 5.5 L11.5 10.5" stroke="#fff" stroke-width="1.1"/></svg>
<svg class="a" style="left:1051px;top:690px" width="20" height="20" viewBox="0 0 20 20"><path d="M6 16 L14.5 3 Q16 1.5 17 2.5 Q18 3.5 16.8 5 L8.5 17.5 L6 18.5z" fill="none" stroke="#fff" stroke-width="1.1"/><path d="M7 13 Q2 13 2.5 16.5 Q3 19 6 18" fill="none" stroke="#fff" stroke-width="1.1"/><path d="M14 9 Q18 8 17.5 11" fill="none" stroke="#fff" stroke-width="1.1"/></svg>
<svg class="a" style="left:1088px;top:691px" width="26" height="16" viewBox="0 0 26 16"><rect x="1.5" y="1.5" width="23" height="13" fill="none" stroke="#fff" stroke-width="1.2"/><path d="M4 5 H22 M4 8 H22" stroke="#fff" stroke-width="1" stroke-dasharray="1.4 1"/><path d="M7 11.5 H19" stroke="#fff" stroke-width="1.2"/></svg>
<div class="t" style="left:1127px;top:693px;color:#fff;transform:scaleX(0.92);transform-origin:0 0">ENG</div>
<div class="t" style="left:1166px;top:684px;color:#fff;transform:scaleX(1.0);transform-origin:0 0">11:52 AM</div>
<div class="t" style="left:1163px;top:703px;color:#fff;transform:scaleX(0.97);transform-origin:0 0">17/06/2017</div>
<svg class="a" style="left:1239px;top:690px" width="18" height="19" viewBox="0 0 18 19"><path d="M1.5 1.5 H16.5 V13.5 H10 L6.5 17 V13.5 H1.5z" fill="none" stroke="#fff" stroke-width="1.2"/></svg>

</body></html>
